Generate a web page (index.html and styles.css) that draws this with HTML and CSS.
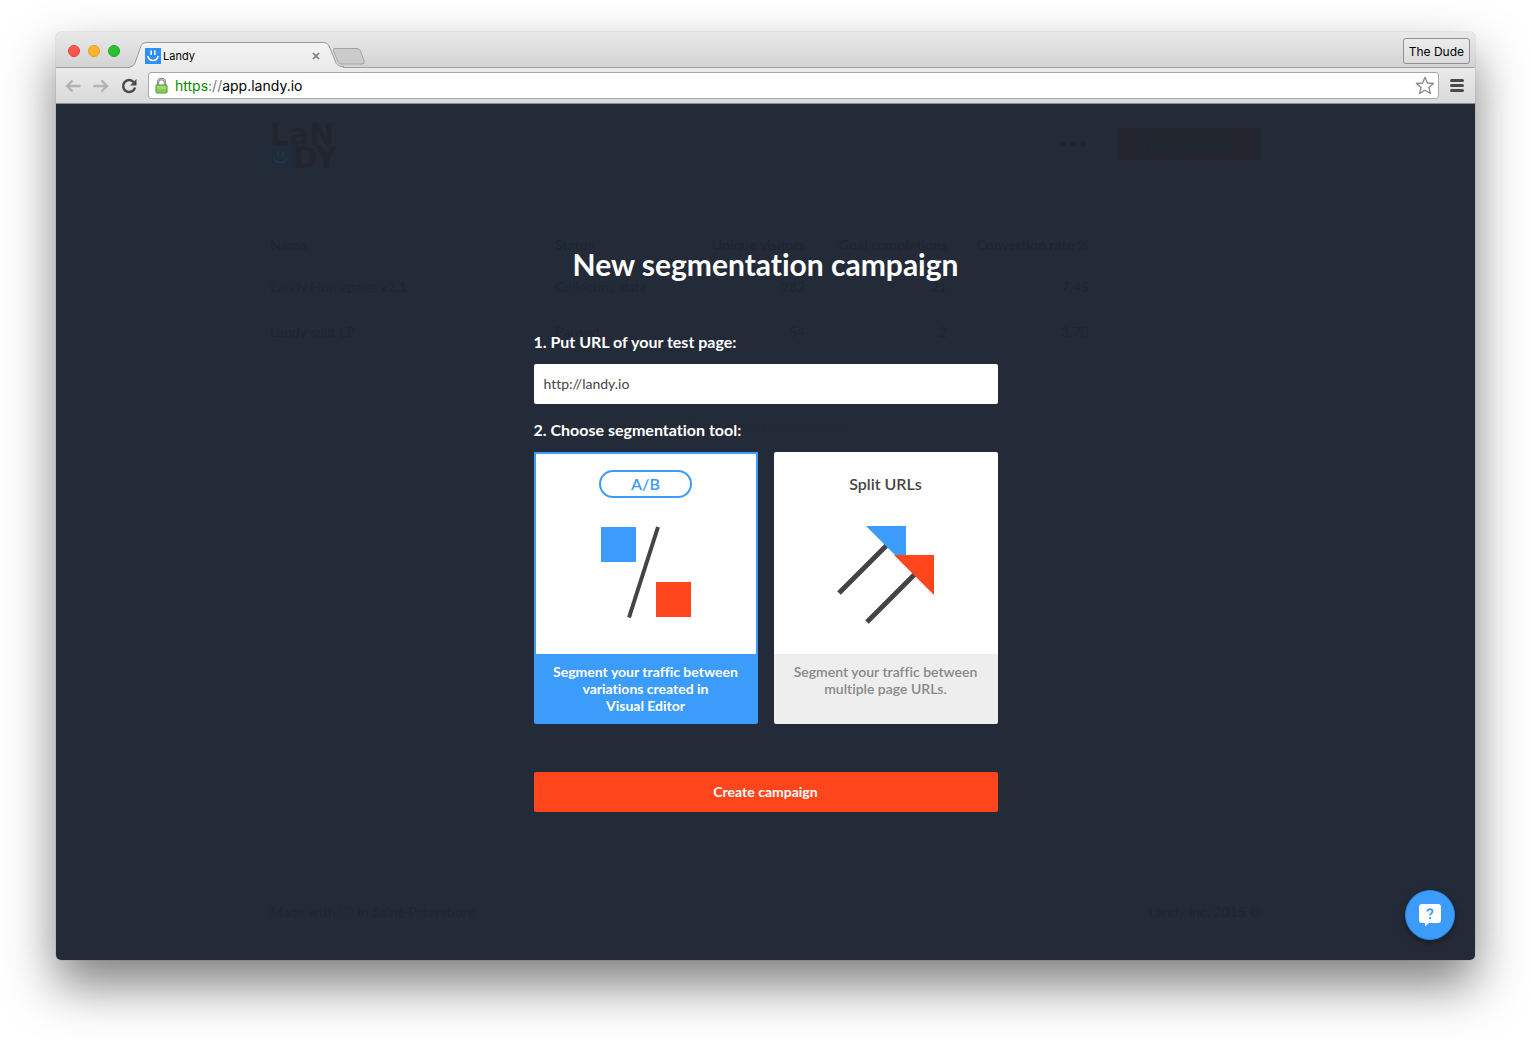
FILE: index.html
```html
<!DOCTYPE html>
<html lang="en">
<head>
    <meta charset="UTF-8">
    <meta name="viewport" content="width=device-width, initial-scale=1.0">
    <title>Landy</title>
    <link rel="stylesheet" href="styles.css">
</head>
<body>

<div class="window">

    <div class="titlebar">
        <div class="lights">
            <span class="light light-red"></span>
            <span class="light light-yellow"></span>
            <span class="light light-green"></span>
        </div>
        <div class="tab">
            <svg class="tab-shape" viewBox="0 0 214 26" preserveAspectRatio="none">
                <defs>
                    <linearGradient id="tabfill" x1="0" y1="0" x2="0" y2="1">
                        <stop offset="0" stop-color="#f3f3f3"/>
                        <stop offset="1" stop-color="#ebebeb"/>
                    </linearGradient>
                </defs>
                <path d="M0 25.5C3 25 4 23 5 21L11 4Q12.5 .5 16 .5H194Q197.5 .5 199 4L206 21C207 23 209 25 213 25.5V26H0Z" fill="url(#tabfill)"/>
                <path d="M0 24.5C3 24.5 4 23 5 21L11 4Q12.5 .5 16 .5H194Q197.5 .5 199 4L206 21C207 23 209 24.5 214 24.5" fill="none" stroke="#9b9b9b"/>
            </svg>
            <svg class="favicon" width="16" height="16" viewBox="0 0 16 16">
                <rect width="16" height="16" fill="#2f8ffb"/>
                <path d="M6.2 2.5v4.500M9.800 2.5v4.500M2.800 8c1.500 6 8.900 6 10.400 0" fill="none" stroke="#fff" stroke-width="1.600"/>
            </svg>
            <span class="tab-title">Landy</span>
            <button class="tab-close" aria-label="Close tab">
                <svg width="8" height="8" viewBox="0 0 8 8"><path d="M1 1l6 6M7 1L1 7" stroke="#777" stroke-width="1.600"/></svg>
            </button>
        </div>
        <button class="new-tab" aria-label="New tab">
            <svg width="34" height="17" viewBox="0 0 34 17"><path d="M3 .5H25Q27.5 .5 28.5 3L32 13Q33 16 30 16H9.5Q7 16 6 13.500L1.500 3Q.5 .5 3 .5Z" fill="#cbcbcb" stroke="#a3a3a3"/></svg>
        </button>
        <button class="profile">The Dude</button>
    </div>

    <div class="toolbar">
        <button class="nav-btn" aria-label="Back">
            <svg width="16" height="14" viewBox="0 0 16 14"><path d="M15.500 7H2M7.500 1.500L2 7l5.500 5.500" fill="none" stroke="#b3b3b3" stroke-width="2.400"/></svg>
        </button>
        <button class="nav-btn" aria-label="Forward">
            <svg width="16" height="14" viewBox="0 0 16 14"><path d="M.5 7H14M8.500 1.500L14 7l-5.500 5.500" fill="none" stroke="#b3b3b3" stroke-width="2.400"/></svg>
        </button>
        <button class="nav-btn" aria-label="Reload">
            <svg width="16" height="16" viewBox="0 0 16 16"><path d="M12.800 4.200A6 6 0 1 0 14 9.500" fill="none" stroke="#4a4a4a" stroke-width="2.500"/><path d="M15.500 1v6.500H9Z" fill="#4a4a4a"/></svg>
        </button>
        <div class="address">
            <svg width="13" height="16" viewBox="0 0 13 16">
                <path d="M3 8V4.500a3.500 3.500 0 0 1 7 0V8" fill="none" stroke="#777" stroke-width="2.400"/>
                <path d="M3 8V4.500a3.500 3.500 0 0 1 7 0V8" fill="none" stroke="#ddd" stroke-width=".8"/>
                <rect x="1" y="7" width="11" height="8" rx="1" fill="#9bdd70" stroke="#4f8f2d"/>
                <path d="M2 12.500h9" stroke="#7fcb52" stroke-width="3"/>
            </svg>
            <span class="url"><span class="url-scheme">https</span><span class="url-sep">://</span>app.landy.io</span>
            <svg width="20" height="19" viewBox="0 0 20 19"><path d="M10 1.300l2.400 5.700 6.200.5-4.700 4 1.500 6L10 14.200 4.600 17.500l1.500-6-4.700-4 6.200-.5Z" fill="#fff" stroke="#8a8a8a" stroke-width="1.300" stroke-linejoin="round"/></svg>
        </div>
        <button class="menu-btn" aria-label="Menu">
            <svg width="14" height="13" viewBox="0 0 14 13"><path d="M1.500 1.500h11M1.500 6.500h11M1.500 11.500h11" stroke="#4a4a4a" stroke-width="3" stroke-linecap="round"/></svg>
        </button>
    </div>

    <div class="page">

        <!-- dashboard under the overlay -->
        <div class="dashboard">
            <div class="dash-header">
                <div class="logo">
                    <span>LaN</span>
                    <span class="logo-row">
                        <svg width="21" height="21" viewBox="0 0 22 22"><rect width="22" height="22" fill="#1f2c3b"/><path d="M8.500 4v6M13.500 4v6M4 11c2 7 12 7 14 0" fill="none" stroke="#273341" stroke-width="2"/></svg>
                        DY
                    </span>
                </div>
                <svg class="dots" width="26" height="6" viewBox="0 0 26 6"><circle cx="3" cy="3" r="2.800"/><circle cx="13" cy="3" r="2.800"/><circle cx="23" cy="3" r="2.800"/></svg>
                <button class="new-campaign">New campaign</button>
            </div>
            <table class="campaigns">
                <thead>
                    <tr>
                        <th class="col-name">Name</th>
                        <th class="col-stat">Status</th>
                        <th class="col-num">Unique visitors</th>
                        <th class="col-num">Goal completions</th>
                        <th class="col-num">Convertion rate %</th>
                        <th></th>
                    </tr>
                </thead>
                <tbody>
                    <tr>
                        <td>Landy Homepage v2.1</td>
                        <td>Collecting data</td>
                        <td class="num">282</td>
                        <td class="num">21</td>
                        <td class="num">7.45</td>
                        <td></td>
                    </tr>
                    <tr>
                        <td>Landy split LP</td>
                        <td>Paused</td>
                        <td class="num">54</td>
                        <td class="num">2</td>
                        <td class="num">3.70</td>
                        <td></td>
                    </tr>
                </tbody>
            </table>
            <a class="archived" href="#">Show archived campaigns</a>
            <div class="dash-footer">
                <span class="made">Made with
                    <svg width="14" height="13" viewBox="0 0 14 13"><path d="M7 12C3 9 .8 6.800.8 4.200.8.5 5.500-.2 7 3 8.500-.2 13.200.5 13.200 4.200 13.200 6.800 11 9 7 12Z" fill="none" stroke="#272732"/></svg>
                    in Saint-Petersburg</span>
                <span>Landy inc. 2015 ©</span>
            </div>
        </div>

        <form class="modal">
            <h1>New segmentation campaign</h1>

            <label class="step" for="url">1. Put URL of your test page:</label>
            <input class="url-input" id="url" type="text" value="http://landy.io">

            <p class="step">2. Choose segmentation tool:</p>
            <div class="tools">
                <label class="tool">
                    <input type="radio" name="tool" value="ab" checked>
                    <span class="tool-top">
                        <span class="tool-name">A/B</span>
                        <svg width="100" height="100" viewBox="0 0 100 100">
                            <rect x="5" y="5" width="35" height="35" fill="#3c9cfb"/>
                            <rect x="60" y="60" width="35" height="35" fill="#ff451c"/>
                            <path d="M62 5L33 95.500" stroke="#444" stroke-width="4"/>
                        </svg>
                    </span>
                    <span class="tool-text">Segment your traffic between variations created in<br>Visual Editor</span>
                </label>
                <label class="tool">
                    <input type="radio" name="tool" value="split">
                    <span class="tool-top">
                        <span class="tool-name">Split URLs</span>
                        <svg width="100" height="100" viewBox="0 0 100 100">
                            <path d="M3 71L51 23M31 100L79 52" stroke="#444446" stroke-width="5"/>
                            <path d="M30 4H70V44Z" fill="#3c9cfb"/>
                            <path d="M58 33H98V73Z" fill="#ff451c"/>
                        </svg>
                    </span>
                    <span class="tool-text">Segment your traffic between multiple page URLs.</span>
                </label>
            </div>

            <button class="create" type="button">Create campaign</button>
        </form>

        <button class="help" aria-label="Help">
            <svg width="22" height="22" viewBox="0 0 22 22">
                <path d="M3 0H19Q22 0 22 3V16Q22 19 19 19H10L6 22.500V19H3Q0 19 0 16V3Q0 0 3 0Z" fill="#fff"/>
                <path d="M8.500 7.500C8.500 4.500 13.500 4.500 13.500 7.500C13.500 9.500 11 9.300 11 11.500M11 13v2" fill="none" stroke="#3c9cfb" stroke-width="1.800"/>
            </svg>
        </button>
    </div>
</div>

</body>
</html>
```
FILE: styles.css
```css
* { box-sizing: border-box; }
body { margin: 0; min-height: 100vh; padding: 32px 56px 80px; display: flex; background: #fff; font-family: Lato, sans-serif; font-size: 14px; font-variant-ligatures: no-common-ligatures; color: #444; }
button { border: none; background: none; padding: 0; font-family: inherit; cursor: pointer; }
svg { display: block; flex: none; overflow: visible; }

.window { flex: 1; display: flex; flex-direction: column; border-radius: 5px; box-shadow: 0 0 1px rgba(0,0,0,0.5), 0 25px 50px rgba(0,0,0,0.5); }

/* browser chrome */
.titlebar { display: flex; align-items: flex-end; height: 36px; padding: 0 5px 0 12px; border-radius: 5px 5px 0 0; border-bottom: 1px solid #a0a0a0; background: linear-gradient(#e9e9e9, #d3d3d3); font-family: Inter, sans-serif; color: #000; }
.lights { display: flex; gap: 8px; padding-bottom: 10px; }
.light { width: 12px; height: 12px; border-radius: 50%; }
.light-red { background: #fc5650; border: 1px solid #e2463f; }
.light-yellow { background: #fdb32a; border: 1px solid #e09e21; }
.light-green { background: #28c231; border: 1px solid #1dab25; }
.tab { position: relative; display: flex; align-items: center; width: 214px; height: 26px; margin: 0 -12px -1px 10px; padding: 1px 24px 0 15px; font-size: 11px; }
.tab-shape { position: absolute; inset: 0; width: 100%; height: 100%; }
.favicon, .tab-title, .tab-close { position: relative; }
.tab-title { flex: 1; padding-left: 2px; }
.new-tab { padding-bottom: 2px; }
.profile { margin: 0 0 3px auto; height: 26px; padding: 0 5px; border: 1px solid #8f8f8f; border-radius: 3px; background: linear-gradient(#ececec, #dcdcdc); font-size: 12px; color: #000; }

.toolbar { display: flex; align-items: center; gap: 12px; height: 36px; padding: 0 11px 0 9px; border-bottom: 1px solid #8e8e8e; background: linear-gradient(#ebebeb, #d9d9d9); }
.address { flex: 1; display: flex; align-items: center; gap: 7px; height: 27px; margin: 0 -1px; padding: 0 3px 0 6px; border: 1px solid #a8a8a8; border-radius: 3px; background: #fff; font-family: Inter, sans-serif; font-size: 14px; color: #000; }
.url { flex: 1; }
.url-scheme { color: #0b8a00; }
.url-sep { color: #777; }

/* page: the dashboard and the modal share one grid cell */
.page { flex: 1; display: grid; border-radius: 0 0 5px 5px; background: #242b38; }
.dashboard, .modal, .help { grid-area: 1 / 1; }

.dashboard { display: flex; flex-direction: column; width: 100%; max-width: 991px; margin: 0 auto; padding: 18px 0 38px; color: #1d2731; line-height: 20px; }
.dash-header { display: flex; align-items: center; height: 44px; margin-bottom: 60px; }
.logo { display: flex; flex-direction: column; margin: 4px auto 0 0; font-family: "DejaVu Sans", sans-serif; font-size: 30px; line-height: 23px; font-weight: 700; color: #23252e; }
.logo-row { display: flex; align-items: center; gap: 2px; }
.dots { margin-right: 31px; fill: #1d2731; }
.new-campaign { height: 32px; padding: 0 26px; border-radius: 2px; background: #23262f; color: #1d2935; font-size: 14px; font-weight: 700; }
.campaigns { width: 100%; border-collapse: collapse; table-layout: fixed; }
.campaigns th, .campaigns td { padding: 0; height: 45px; text-align: left; }
.campaigns th { height: 38px; }
.campaigns .col-name { width: 285px; }
.campaigns .col-stat { width: 108px; }
.campaigns .col-num { width: 142px; text-align: right; }
.campaigns .num { text-align: right; }
.archived { align-self: center; margin-top: 62px; color: #202935; text-decoration: none; }
.dash-footer { display: flex; justify-content: space-between; margin-top: auto; }
.made { display: flex; align-items: center; gap: 4px; }

.modal { align-self: center; justify-self: center; z-index: 1; display: flex; flex-direction: column; width: 100%; max-width: 464px; padding-bottom: 8px; }
h1 { margin: 0 0 48px; font-size: 30px; line-height: 40px; font-weight: 700; color: #fff; text-align: center; white-space: nowrap; }
.step { margin: 0 0 12px; font-size: 16px; line-height: 20px; font-weight: 700; color: #fff; }
.url-input { height: 40px; margin-bottom: 16px; padding: 0 10px 2px; border: none; border-radius: 2px; background: #fff; font-family: inherit; font-size: 14px; font-variant-ligatures: no-common-ligatures; color: #444; }
.tools { display: grid; grid-template-columns: 1fr 1fr; gap: 16px; }
.tool { position: relative; display: flex; flex-direction: column; border-radius: 2px; overflow: hidden; text-align: center; cursor: pointer; }
.tool input { position: absolute; opacity: 0; }
.tool-top { display: flex; flex-direction: column; align-items: center; gap: 24px; height: 202px; padding-top: 18px; background: #fff; }
.tool-name { height: 28px; padding: 0 30px; border: 2px solid transparent; border-radius: 14px; font-size: 16px; line-height: 24px; font-weight: 600; }
.tool-text { height: 70px; padding: 9px 18px; background: #eee; color: #888; line-height: 17px; font-weight: 600; }
.tool input:checked ~ .tool-top { border: 2px solid #3c9cfb; border-bottom: none; padding-top: 16px; }
.tool input:checked ~ .tool-top .tool-name { border-color: #3c9cfb; color: #3c9cfb; }
.tool input:checked ~ .tool-text { background: #3c9cfb; color: #fff; font-weight: 700; }
.create { height: 40px; margin-top: 48px; padding-bottom: 2px; border-radius: 2px; background: #ff451c; color: #fff; font-size: 14px; font-weight: 700; }

.help { align-self: end; justify-self: end; z-index: 2; display: flex; align-items: center; justify-content: center; width: 50px; height: 50px; margin: 0 20px 20px; border: 1px solid #2b84e0; border-radius: 50%; background: #3c9cfb; box-shadow: 0 3px 8px rgba(0,0,0,0.35); }
```
